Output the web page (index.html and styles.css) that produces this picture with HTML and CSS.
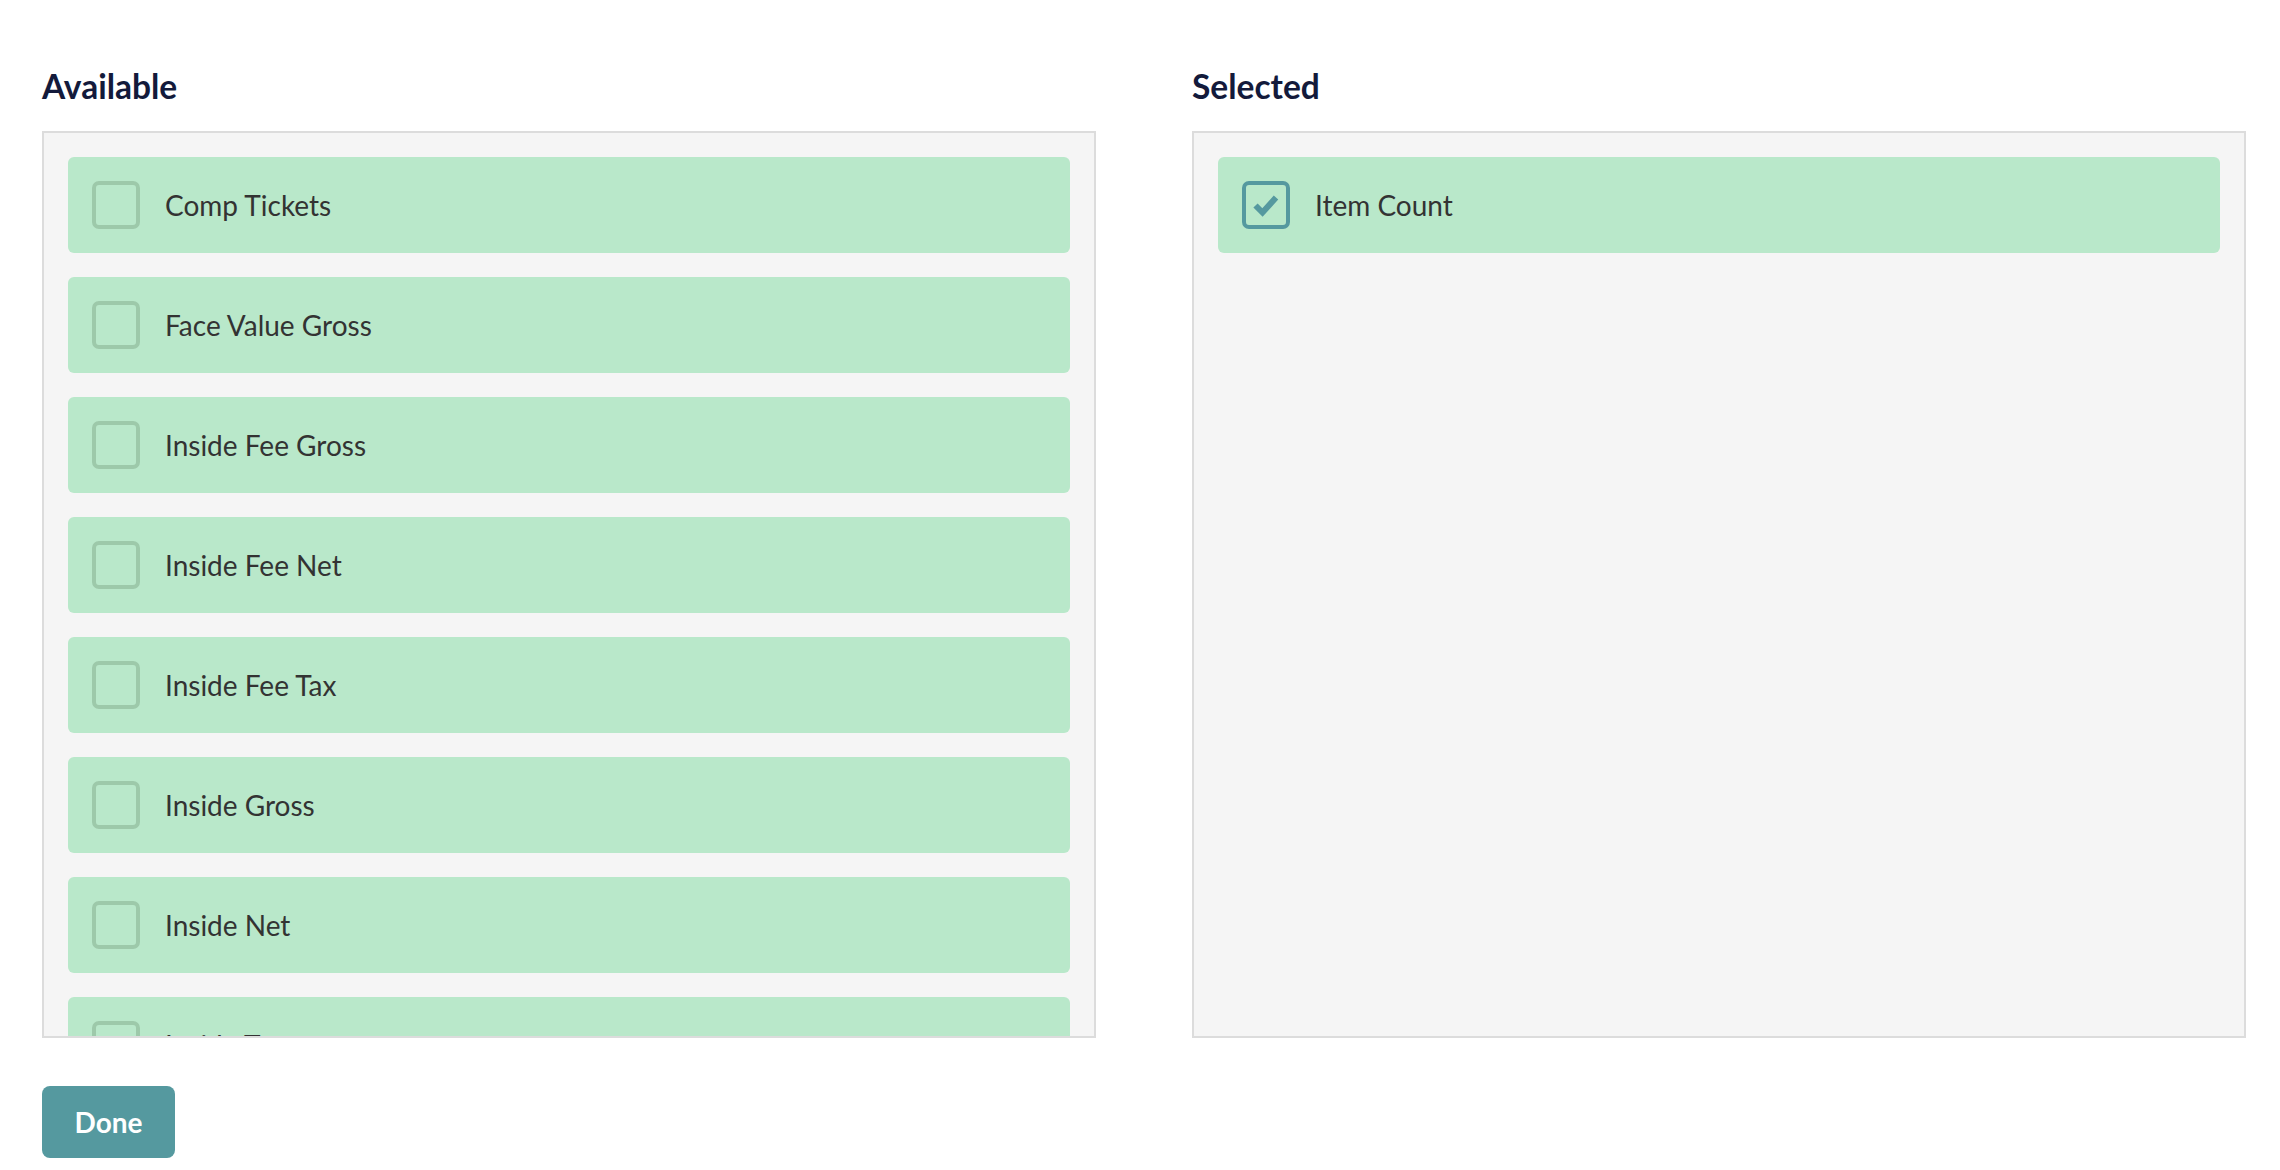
FILE: index.html
```html
<!DOCTYPE html>
<html lang="en">

<head>
    <meta charset="UTF-8">
    <meta name="viewport" content="width=device-width, initial-scale=1.0">
    <title>Choose Columns</title>
    <link rel="stylesheet" href="styles.css">
</head>

<body>

    <!-- Column Picker -->
    <div class="picker">

        <!-- Available Columns -->
        <section class="column">
            <h2>Available</h2>
            <div class="list-box">
                <label class="item">
                    <span class="check"></span>
                    <span class="item-label">Comp Tickets</span>
                </label>
                <label class="item">
                    <span class="check"></span>
                    <span class="item-label">Face Value Gross</span>
                </label>
                <label class="item">
                    <span class="check"></span>
                    <span class="item-label">Inside Fee Gross</span>
                </label>
                <label class="item">
                    <span class="check"></span>
                    <span class="item-label">Inside Fee Net</span>
                </label>
                <label class="item">
                    <span class="check"></span>
                    <span class="item-label">Inside Fee Tax</span>
                </label>
                <label class="item">
                    <span class="check"></span>
                    <span class="item-label">Inside Gross</span>
                </label>
                <label class="item">
                    <span class="check"></span>
                    <span class="item-label">Inside Net</span>
                </label>
                <label class="item">
                    <span class="check"></span>
                    <span class="item-label">Inside Tax</span>
                </label>
            </div>
        </section>

        <!-- Selected Columns -->
        <section class="column">
            <h2>Selected</h2>
            <div class="list-box">
                <label class="item">
                    <span class="check checked">
                        <svg viewBox="0 0 28 28" width="28" height="28">
                            <path d="M3.5 14.5 L10.5 21.5 L24 6.5" fill="none" stroke="#55999f" stroke-width="6"/>
                        </svg>
                    </span>
                    <span class="item-label">Item Count</span>
                </label>
            </div>
        </section>

    </div>

    <button class="done-button">Done</button>

</body>

</html>
```

FILE: styles.css
```css
/* General Reset */
* {
    margin: 0;
    padding: 0;
    box-sizing: border-box;
    font-family: Lato, "Liberation Sans", sans-serif;
}

body {
    background-color: #ffffff;
    color: #333333;
    padding: 66px 34px 0 42px;
}

/* Two side by side lists */
.picker {
    display: grid;
    grid-template-columns: 1fr 1fr;
    column-gap: 96px;
}

h2 {
    font-size: 33.5px;
    line-height: 40px;
    font-weight: 700;
    color: #131a3b;
    margin-bottom: 25px;
}

.list-box {
    height: 907px;
    background-color: #f5f5f5;
    border: 2px solid #dcdcdc;
    padding: 24px;
    display: flex;
    flex-direction: column;
    gap: 24px;
    overflow: hidden;
}

/* Each column row */
.item {
    flex-shrink: 0;
    height: 96px;
    display: flex;
    align-items: center;
    gap: 25px;
    padding: 0 24px;
    background-color: #b9e8ca;
    border-radius: 6px;
    cursor: pointer;
}

.check {
    flex-shrink: 0;
    width: 48px;
    height: 48px;
    border: 4px solid #9dc9aa;
    border-radius: 7px;
    display: flex;
    align-items: center;
    justify-content: center;
}

.check.checked {
    border-color: #55999f;
}

.item-label {
    font-size: 28px;
    color: #333333;
}

/* Done Button */
.done-button {
    margin-top: 48px;
    width: 133px;
    height: 72px;
    background-color: #55999f;
    color: #ffffff;
    border: none;
    border-radius: 8px;
    font-size: 28px;
    font-weight: 700;
    cursor: pointer;
}

.done-button:hover {
    background-color: #468a90;
}
```
